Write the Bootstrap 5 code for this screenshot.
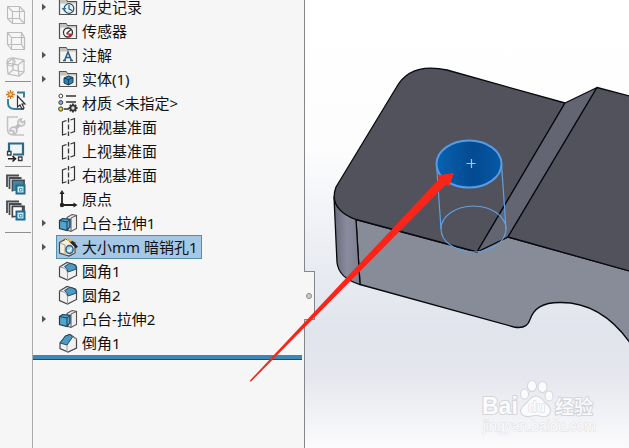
<!DOCTYPE html>
<html lang="zh-CN">
<head>
<meta charset="utf-8">
<meta name="viewport" content="width=device-width, initial-scale=1">
<title>特征树</title>
<link rel="stylesheet" href="https://cdn.jsdelivr.net/npm/bootstrap@5.3.0/dist/css/bootstrap.min.css">
<style>
body { font-family: "Noto Sans", "Noto Sans CJK SC", sans-serif; background: #f6f6f6; color: #111; }
.tools { width: 33px; flex: none; padding: 2px 2px 0 4px; border-right: 1px solid #aaa; }
.tool { height: 26px; width: 24px; line-height: 0; }
.tool svg { width: 24px; height: 24px; }
.rule { height: 1px; flex: none; background: #909090; margin: 1px -1px 5px 1px; }
.rule-last { margin-top: 8px; }
.tree-panel { width: 272px; flex: none; border-right: 1px solid #85858a; }
.tree { margin: -5px 0 0; }
.tree-row { height: 24px; }
.twist { width: 23px; height: 24px; padding-left: 8px; line-height: 0; text-align: left; }
.feature { height: 24px; padding: 0 3px 0 1px; gap: 4px; font-size: 15px; line-height: 22px; color: #111; border: 1px solid transparent; border-radius: 0; white-space: nowrap; }
.feature svg { width: 20px; height: 20px; flex: none; }
.feature.active { background: #a6c8e4; border-color: #548fa9; }
.rollback { height: 5px; margin-right: 2px; background: #3b87b7; border-bottom: 1px solid #164a91; }
.flyout { left: 305px; top: 271px; width: 11px; height: 49px; background: #f6f6f6; border: 1px solid #85858a; border-left: 0; margin-left: -1px; }
.flyout i { width: 6px; height: 6px; border: 1px solid #8a8a8a; border-radius: 50%; background: #ccc; }
.scene { min-width: 0; }
.overlay { left: 0; top: 0; pointer-events: none; }
.wm { font-family: "Liberation Sans", "Noto Sans CJK SC", sans-serif; }
</style>
<script src="https://cdn.jsdelivr.net/npm/bootstrap@5.3.0/dist/js/bootstrap.bundle.min.js"></script>
</head>
<body>
<svg class="d-none" aria-hidden="true">
  <symbol id="twist" viewBox="0 0 6 8"><path d="M1 0.5L5 4 1 7.5z" fill="#555"/></symbol>
  <symbol id="folder" viewBox="0 0 20 20"><path d="M1.500 17.500V2.500H8l1.500 2h9v13z" fill="#f3f3f1" stroke="#55534f" stroke-width="1.200"/><path d="M2 3h6l1.200 2H18v1.500H2z" fill="#c3c1bd"/></symbol>
  <symbol id="history" viewBox="0 0 20 20"><use href="#folder"/><circle cx="11" cy="11.500" r="4.800" fill="#e5f1f8" stroke="#1f4e70" stroke-width="1.200"/><path d="M11 8v4l3 1.500" fill="none" stroke="#1f4e70" stroke-width="1.100"/><path d="M3.500 11h5L6 14z" fill="#2877a5"/></symbol>
  <symbol id="sensor" viewBox="0 0 20 20"><use href="#folder"/><circle cx="10" cy="11.500" r="4.500" fill="#fff" stroke="#333" stroke-width="1.300"/><path d="M9 12l4-3.500" stroke="#333" stroke-width="1.300"/><path d="M10.500 12.500h4a4.500 4.500 0 0 1-4 3.500z" fill="#d3203b"/><circle cx="9.500" cy="12.500" r="1.200" fill="#d3203b"/></symbol>
  <symbol id="note" viewBox="0 0 20 20"><use href="#folder"/><path d="M6.500 15.500L10 7l3.500 8.500M7.600 12.600h4.800M5 15.500h3M12 15.500h3" fill="none" stroke="#236084" stroke-width="1.500"/></symbol>
  <symbol id="solid" viewBox="0 0 20 20"><use href="#folder"/><path d="M6 9l4.500-2L15 8.500v5L10.500 16 6 14z" fill="#2f80aa" stroke="#133e5b"/><path d="M6 9l4.500 1.500L15 8.500M10.500 10.500V16" fill="none" stroke="#133e5b"/></symbol>
  <symbol id="material" viewBox="0 0 20 20"><g stroke="#444"><circle cx="2.800" cy="3" r="1.900" fill="#fff"/><circle cx="2.800" cy="9.500" r="2" fill="#79a7ef"/><circle cx="2.800" cy="16" r="2.200" fill="#e2d016"/></g><path d="M8 3h10M8 9h10M6 16h5" stroke="#333" stroke-width="1.600"/><path d="M15 10.500v9M10.500 15h9M11.800 11.800l6.400 6.400M18.200 11.800l-6.400 6.400" stroke="#333" stroke-width="1.800"/><circle cx="15" cy="15" r="2.600" fill="#ddd" stroke="#333" stroke-width="1.800"/></symbol>
  <symbol id="plane" viewBox="0 0 20 20"><path d="M8.500 3.500L4.500 5v13l4-1.300M12.500 3L16.500 1.500v13l-4 1.500" fill="none" stroke="#333" stroke-width="1.200"/><path d="M10.500 1v4.500M10.500 7.500v5M10.500 14.500V19" stroke="#333" stroke-width="1.300"/></symbol>
  <symbol id="origin" viewBox="0 0 20 20"><path d="M4 3v13h14" fill="none" stroke="#222" stroke-width="1.800"/><path d="M1.500 5L4 1l2.500 4zM15.500 13.500l4 2.500-4 2.500z" fill="#222"/><circle cx="4" cy="16" r="2.200" fill="#222"/></symbol>
  <symbol id="boss" viewBox="0 0 20 20"><path d="M9 4.500L14 1.500l4.500 1v13L13 18.500 9 17z" fill="#eee" stroke="#555" stroke-width="1.100"/><path d="M13 5l5.500-2.500M13 5v13" stroke="#555"/><path d="M1.500 7.500l3-2 7.500.8v7.500L9 17.500l-7.500-2z" fill="#55a2ca" stroke="#173f58" stroke-width="1.200"/><path d="M1.500 7.500L9 9l3-2.500M9 9v8.500" fill="none" stroke="#173f58"/></symbol>
  <symbol id="hole" viewBox="0 0 20 20"><path d="M1.500 5.500L8 2l9 4v10l-6 3-9.500-3z" fill="#f4eee1" stroke="#4b4740" stroke-width="1.200"/><path d="M2 6l5 2v10" fill="none" stroke="#aaa292"/><ellipse cx="11.500" cy="12.500" rx="3.600" ry="4" fill="#a9cfe5" stroke="#1f628c" stroke-width="1.500"/><path d="M9.500 13q2 2 4-2" fill="none" stroke="#fff" stroke-width="1.400"/><path d="M12 3.500l7 7" stroke="#272321" stroke-width="2.600"/><path d="M10.500 2l2.500 2.500" stroke="#e7a63b" stroke-width="2"/><path d="M7 3l2-2 1 3 4-2.500-1 3" fill="none" stroke="#edbf58"/></symbol>
  <symbol id="fillet" viewBox="0 0 20 20"><path d="M1.500 6L9 1.500l8.500 2.500 1 2v8.500L9.500 19l-8-3.500z" fill="#f1f1f1" stroke="#45494c" stroke-width="1.200"/><path d="M1.500 6L6 7q3.500 1.500 3.500 5v7" fill="none" stroke="#999"/><path d="M6.500 5.500L11.500 2.500q6 0 7 5.500l-8.500 3q-.5-4-3.500-5.500z" fill="#4d9bc4" stroke="#234b62"/></symbol>
  <symbol id="chamfer" viewBox="0 0 20 20"><path d="M2 10l5.500-7L12 1.500l6.500 4.500v9L10 19l-8-3.500z" fill="#f1f1f1" stroke="#45494c" stroke-width="1.200"/><path d="M2 10l5.500-7L12 1.500l2.500 2.500-5.500 8z" fill="#4d9bc4" stroke="#234b62"/><path d="M9 12v7M14.500 4l4 2" stroke="#999"/></symbol>
  <symbol id="cube" viewBox="0 0 24 24"><path d="M3.500 3.500h12v12h-12zM8.500 8.500h12v12h-12zM3.500 3.500l5 5M15.500 3.500l5 5M15.500 15.500l5 5M3.500 15.500l5 5" fill="none" stroke="#bcbcbc" stroke-width="1.100"/></symbol>
  <symbol id="stack" viewBox="0 0 24 24"><path d="M3 14V2.500h12M5.500 16V5h12M8.500 18.500V7.500H20V12" fill="none" stroke="#454b50" stroke-width="1.800"/></symbol>
  <symbol id="badge-square" viewBox="0 0 24 24"><path d="M12.500 12.500h8v8h-8z" fill="#c9edf9" stroke="#25698c" stroke-width="2"/><path d="M15.500 15.500h2.500v2.500h-2.500z" fill="#fff" stroke="#3d93b8"/></symbol>
</svg>

<div class="d-flex vh-100 overflow-hidden position-relative">
  <nav class="tools d-flex flex-column" aria-label="视图工具">
    <button class="tool btn p-0 border-0" aria-label="视图一"><svg><use href="#cube"/></svg></button>
    <button class="tool btn p-0 border-0" aria-label="视图二"><svg viewBox="0 0 24 24"><path d="M3.500 3.500h14v12h-14zM7.500 8.500h13v12h-13zM3.500 3.500l4 5M17.500 3.500l3 5M17.500 15.500l3 5M3.500 15.500l4 5" fill="none" stroke="#bcbcbc" stroke-width="1.200"/></svg></button>
    <button class="tool btn p-0 border-0" aria-label="视图三"><svg viewBox="0 0 24 24"><path d="M3 8l6-5 11 2v12l-5 4-11-2zM3 8l11 2 6-5M14 10l1 11M9 3v12l11 2M9 15l-5 4" fill="none" stroke="#bcbcbc" stroke-width="1.200"/><circle cx="7" cy="7" r="4" fill="none" stroke="#bcbcbc" stroke-width="1.200"/></svg></button>
    <div class="rule"></div>
    <button class="tool btn p-0 border-0" aria-label="草图"><svg viewBox="0 0 24 24"><path d="M4 11v4q0 6 7 6h9M13 4.500h7v5" fill="none" stroke="#397a9b" stroke-width="1.900"/><path d="M6.500 2v9M2 6.500h9M3.500 3.500l6 6M9.500 3.500l-6 6" stroke="#c77825" stroke-width="1.300"/><circle cx="6.500" cy="6.500" r="1.300" fill="#ffe38c"/><path d="M13.500 8v11l2.500-2 2 4 2-1-2-4h3z" fill="#fff" stroke="#333" stroke-width="1.200"/></svg></button>
    <button class="tool btn p-0 border-0" aria-label="修改"><svg viewBox="0 0 24 24"><path d="M14 3H3.500v12q0 6 6 6H20" fill="none" stroke="#c3c3c3" stroke-width="1.600"/><path d="M10 16l6-6" stroke="#bdbdbd" stroke-width="3.500"/><path d="M20.500 7a3.500 3.500 0 1 1-3-2l-1 2.500 2 1zM6 17a3.500 3.500 0 1 1 3 3l1-2.500-2-1z" fill="#eee" stroke="#bdbdbd" stroke-width="1.500"/></svg></button>
    <button class="tool btn p-0 border-0" aria-label="显示"><svg viewBox="0 0 24 24"><path d="M5 12V3.500h14v11H9" fill="#eef5f8" stroke="#286987" stroke-width="2.200"/><path d="M3.500 11.500h3.500v3.500H3.500zM14.500 17h3.500v3.500h-3.500z" fill="#fff" stroke="#303c45" stroke-width="1.300"/><path d="M4 18.800h7M8.500 16l3 2.800-3 2.700" fill="none" stroke="#202020" stroke-width="1.600"/></svg></button>
    <div class="rule"></div>
    <button class="tool btn p-0 border-0" aria-label="实体叠放"><svg viewBox="0 0 24 24"><use href="#stack"/><path d="M9 8h10v10H9z" fill="#3d86a7"/><use href="#badge-square"/></svg></button>
    <button class="tool btn p-0 border-0" aria-label="线框叠放"><svg viewBox="0 0 24 24"><use href="#stack"/><path d="M8.500 7.500h10v10h-10z" fill="#fff" stroke="#444" stroke-width="1.400"/><use href="#badge-square"/></svg></button>
    <div class="rule rule-last"></div>
  </nav>

  <aside class="tree-panel" aria-label="特征树">
    <ul class="tree list-unstyled">
      <li class="tree-row d-flex"><button class="twist btn border-0 py-0 pe-0" aria-label="展开"><svg width="6" height="8"><use href="#twist"/></svg></button><button class="feature btn d-flex align-items-center"><svg><use href="#history"/></svg>历史记录</button></li>
      <li class="tree-row d-flex"><span class="twist"></span><button class="feature btn d-flex align-items-center"><svg><use href="#sensor"/></svg>传感器</button></li>
      <li class="tree-row d-flex"><button class="twist btn border-0 py-0 pe-0" aria-label="展开"><svg width="6" height="8"><use href="#twist"/></svg></button><button class="feature btn d-flex align-items-center"><svg><use href="#note"/></svg>注解</button></li>
      <li class="tree-row d-flex"><button class="twist btn border-0 py-0 pe-0" aria-label="展开"><svg width="6" height="8"><use href="#twist"/></svg></button><button class="feature btn d-flex align-items-center"><svg><use href="#solid"/></svg>实体(1)</button></li>
      <li class="tree-row d-flex"><span class="twist"></span><button class="feature btn d-flex align-items-center"><svg><use href="#material"/></svg>材质 &lt;未指定&gt;</button></li>
      <li class="tree-row d-flex"><span class="twist"></span><button class="feature btn d-flex align-items-center"><svg><use href="#plane"/></svg>前视基准面</button></li>
      <li class="tree-row d-flex"><span class="twist"></span><button class="feature btn d-flex align-items-center"><svg><use href="#plane"/></svg>上视基准面</button></li>
      <li class="tree-row d-flex"><span class="twist"></span><button class="feature btn d-flex align-items-center"><svg><use href="#plane"/></svg>右视基准面</button></li>
      <li class="tree-row d-flex"><span class="twist"></span><button class="feature btn d-flex align-items-center"><svg><use href="#origin"/></svg>原点</button></li>
      <li class="tree-row d-flex"><button class="twist btn border-0 py-0 pe-0" aria-label="展开"><svg width="6" height="8"><use href="#twist"/></svg></button><button class="feature btn d-flex align-items-center"><svg><use href="#boss"/></svg>凸台-拉伸1</button></li>
      <li class="tree-row d-flex"><button class="twist btn border-0 py-0 pe-0" aria-label="展开"><svg width="6" height="8"><use href="#twist"/></svg></button><button class="feature btn active d-flex align-items-center"><svg><use href="#hole"/></svg>大小mm 暗销孔1</button></li>
      <li class="tree-row d-flex"><span class="twist"></span><button class="feature btn d-flex align-items-center"><svg><use href="#fillet"/></svg>圆角1</button></li>
      <li class="tree-row d-flex"><span class="twist"></span><button class="feature btn d-flex align-items-center"><svg><use href="#fillet"/></svg>圆角2</button></li>
      <li class="tree-row d-flex"><button class="twist btn border-0 py-0 pe-0" aria-label="展开"><svg width="6" height="8"><use href="#twist"/></svg></button><button class="feature btn d-flex align-items-center"><svg><use href="#boss"/></svg>凸台-拉伸2</button></li>
      <li class="tree-row d-flex"><span class="twist"></span><button class="feature btn d-flex align-items-center"><svg><use href="#chamfer"/></svg>倒角1</button></li>
    </ul>
    <div class="rollback"></div>
  </aside>

  <main class="scene flex-grow-1">
    <svg class="w-100 h-100 d-block" viewBox="305 0 324 448" preserveAspectRatio="xMinYMin slice" role="img" aria-label="零件模型">
      <defs>
        <linearGradient id="sky" x1="0" y1="0" x2="0" y2="1"><stop offset="0" stop-color="#fff"/><stop offset=".33" stop-color="#fdfdfe"/><stop offset=".55" stop-color="#eceef4"/><stop offset=".74" stop-color="#e1e4ec"/><stop offset=".84" stop-color="#e5e7ed"/><stop offset="1" stop-color="#fbfbfc"/></linearGradient>
        <linearGradient id="corner"><stop offset="0" stop-color="#686a79"/><stop offset=".5" stop-color="#8b8b9f"/><stop offset="1" stop-color="#7d7f8f"/></linearGradient>
        <linearGradient id="bore"><stop offset="0" stop-color="#0862b0"/><stop offset=".55" stop-color="#034a92"/><stop offset="1" stop-color="#0758a3"/></linearGradient>
      </defs>
      <path d="M305 0h324v448H305z" fill="url(#sky)"/>
      <g stroke="#08090d" stroke-width="1.300" stroke-linejoin="round">
        <path d="M356 219.500L477 252l31-15 125 35v75q-30-45-73-44.500c-18 0-26 6-30 17q-3 10-16 7.500L360 284.500z" fill="#888b98"/>
        <path d="M334 197q4 16 22 22.500l4 65q-21-6-23-22z" fill="url(#corner)"/>
        <path d="M565 103L447 70q-37-8-51 18L336 187q-8 22 20 32.500L477 252z" fill="#51525c"/>
        <path d="M565 103l32-15.500L508 237l-31 15z" fill="#636573"/>
        <path d="M597 87.500l36 9.500v175l-125-35z" fill="#51525c"/>
      </g>
      <g fill="none" stroke="#629fdf" stroke-width="1.200">
        <ellipse cx="473.500" cy="229" rx="32.500" ry="23"/>
        <path d="M436.500 164l4.500 65M501.500 164l4.500 65"/>
        <ellipse cx="469" cy="164" rx="32.500" ry="23.500" fill="url(#bore)" stroke="#589ce6" stroke-width="2"/>
        <path d="M466.500 163.500h9M471.500 159v9" stroke="#a5c7ef"/>
      </g>
      <g class="wm" fill="#fbfbfd" stroke="#d3d5db" stroke-width="2" paint-order="stroke">
        <text x="482" y="414" font-size="23" font-weight="700">Bai</text>
        <g><ellipse cx="524.500" cy="394" rx="3.500" ry="4.500"/><ellipse cx="532" cy="386" rx="4" ry="5"/><ellipse cx="542.500" cy="387" rx="4" ry="5"/><ellipse cx="549" cy="396" rx="3.500" ry="4.500"/><path d="M529 401q7-9 14 0l5 5c5 6 0 11-6 10q-6-2-12 0c-8 1-12-5-6-10z"/></g>
        <text x="528" y="412" font-size="14" font-weight="700" stroke-width="1">du</text>
        <text x="555" y="414" font-size="19" font-weight="500">经验</text>
        <text x="483" y="431" font-size="14" stroke-width="1" stroke="#dedfe4">jingyan.baidu.com</text>
      </g>
    </svg>
  </main>

  <button class="flyout position-absolute p-0 d-flex align-items-center justify-content-center" aria-label="折叠面板"><i></i></button>
  <svg class="overlay position-absolute" width="629" height="448" aria-hidden="true"><path d="M249.500 381L439.500 178.500 437.500 175.500 454 173 449 186.500 446 184.500 251 381.500z" fill="#fb2418"/></svg>
</div>
</body>
</html>
